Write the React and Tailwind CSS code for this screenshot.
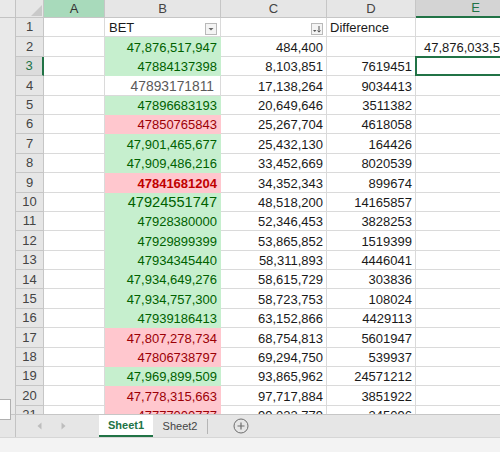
import React from 'react';

const rows = [
  { b: 'BET', t: 'hdr', c: '', d: 'Difference', e: '' },
  { b: '47,876,517,947', t: 'g', c: '484,400', d: '', e: '47,876,033,5' },
  { b: '47884137398', t: 'g', c: '8,103,851', d: '7619451', e: '' },
  { b: '47893171811', t: 'n', c: '17,138,264', d: '9034413', e: '' },
  { b: '47896683193', t: 'g', c: '20,649,646', d: '3511382', e: '' },
  { b: '47850765843', t: 'r', c: '25,267,704', d: '4618058', e: '' },
  { b: '47,901,465,677', t: 'g', c: '25,432,130', d: '164426', e: '' },
  { b: '47,909,486,216', t: 'g', c: '33,452,669', d: '8020539', e: '' },
  { b: '47841681204', t: 'rb', c: '34,352,343', d: '899674', e: '' },
  { b: '47924551747', t: 'gl', c: '48,518,200', d: '14165857', e: '' },
  { b: '47928380000', t: 'g', c: '52,346,453', d: '3828253', e: '' },
  { b: '47929899399', t: 'g', c: '53,865,852', d: '1519399', e: '' },
  { b: '47934345440', t: 'g', c: '58,311,893', d: '4446041', e: '' },
  { b: '47,934,649,276', t: 'g', c: '58,615,729', d: '303836', e: '' },
  { b: '47,934,757,300', t: 'g', c: '58,723,753', d: '108024', e: '' },
  { b: '47939186413', t: 'g', c: '63,152,866', d: '4429113', e: '' },
  { b: '47,807,278,734', t: 'r', c: '68,754,813', d: '5601947', e: '' },
  { b: '47806738797', t: 'r', c: '69,294,750', d: '539937', e: '' },
  { b: '47,969,899,509', t: 'g', c: '93,865,962', d: '24571212', e: '' },
  { b: '47,778,315,663', t: 'r', c: '97,717,884', d: '3851922', e: '' },
  { b: '47777000777', t: 'r', c: '99,023,779', d: '345096', e: '' },
];

function FilterBtn() {
  return (
    <div className="w-[12px] h-[12px] border border-[#b9b9b9] bg-[#f4f4f4] flex items-center justify-center">
      <svg width="8" height="8" viewBox="0 0 8 8">
        <path d="M1.5 3 L6.5 3 L4 5.5 Z" fill="#666" />
      </svg>
    </div>
  );
}

function SortFilterBtn() {
  return (
    <div className="w-[12px] h-[12px] border border-[#b9b9b9] bg-[#f4f4f4] flex items-center justify-center">
      <svg width="10" height="10" viewBox="0 0 10 10">
        <path d="M1 6 L4.5 6 L2.75 8 Z" fill="#555" />
        <path d="M7 2 L7 8" stroke="#555" strokeWidth="1" />
        <path d="M5.5 6.5 L7 8.2 L8.5 6.5" stroke="#555" strokeWidth="1" fill="none" />
      </svg>
    </div>
  );
}

function BCell({ row }) {
  const t = row.t;
  if (t === 'hdr') {
    return (
      <div className="w-[116px] shrink-0 border-r border-b border-[#dadada] bg-white flex items-end justify-between pl-[4px] pr-[3px] pb-[1px]">
        <span className="text-[13px] leading-[15px] text-[#1a1a1a]">{row.b}</span>
        <div className="pb-[0px]"><FilterBtn /></div>
      </div>
    );
  }
  const cls =
    t === 'g'
      ? 'bg-[#c6efce] border-[#c6efce] text-[#006100] text-[13px]'
      : t === 'gl'
      ? 'bg-[#c6efce] border-[#c6efce] text-[#006100] text-[14.6px]'
      : t === 'r'
      ? 'bg-[#ffc7ce] border-[#ffc7ce] text-[#9c0006] text-[13px]'
      : t === 'rb'
      ? 'bg-[#ffc7ce] border-[#ffc7ce] text-[#c00000] text-[13px] font-bold'
      : 'bg-white border-[#dadada] text-[#595959] text-[13.8px] pr-[6px]';
  return (
    <div className={`w-[116px] shrink-0 border-r border-b flex items-end justify-end pr-[3px] pb-[1px] ${cls}`}>
      <span className="leading-[15px] whitespace-nowrap">{row.b}</span>
    </div>
  );
}

function Row({ row, n }) {
  const sel = n === 3;
  return (
    <div className="flex h-[19.4px] shrink-0">
      <div className="w-[16px] shrink-0 bg-[#e9e9e9] border-r border-[#c3c3c3]" />
      <div
        className={
          sel
            ? 'w-[28px] shrink-0 bg-[#dcdcdc] border-b border-[#c6c6c6] border-r-2 border-r-[#217346] flex items-center justify-center text-[13px] text-[#217346]'
            : 'w-[28px] shrink-0 bg-[#e6e6e6] border-r border-b border-[#c6c6c6] flex items-center justify-center text-[13px] text-[#444]'
        }
      >
        {n}
      </div>
      <div className="w-[61px] shrink-0 border-r border-b border-[#dadada] bg-white" />
      <BCell row={row} />
      <div className="w-[106px] shrink-0 border-r border-b border-[#dadada] bg-white flex items-end justify-end pr-[3px] pb-[1px]">
        {n === 1 ? (
          <SortFilterBtn />
        ) : (
          <span className="text-[13px] leading-[15px] text-[#1a1a1a] whitespace-nowrap">{row.c}</span>
        )}
      </div>
      <div
        className={
          n === 1
            ? 'w-[89px] shrink-0 border-r border-b border-[#dadada] bg-white flex items-end justify-start pl-[3px] pb-[1px]'
            : 'w-[89px] shrink-0 border-r border-b border-[#dadada] bg-white flex items-end justify-end pr-[3px] pb-[1px]'
        }
      >
        <span className="text-[13px] leading-[15px] text-[#1a1a1a] whitespace-nowrap">{row.d}</span>
      </div>
      <div className="relative w-[120px] shrink-0 border-r border-b border-[#dadada] bg-white flex items-end pl-[8px] pb-[1px] overflow-visible">
        <span className="text-[13px] leading-[15px] text-[#1a1a1a] whitespace-nowrap">{row.e}</span>
        {sel && (
          <div className="absolute left-[-1px] top-[-1px] bottom-[-1px] right-[-2px] border-2 border-[#217346]" />
        )}
      </div>
    </div>
  );
}

export default function App() {
  return (
    <div className="relative w-[500px] h-[452px] overflow-hidden bg-white font-['Liberation_Sans',Arial,sans-serif] flex flex-col">
      <div className="h-[414px] shrink-0 overflow-hidden flex flex-col">
        {/* column headers */}
        <div className="flex h-[18px] shrink-0">
          <div className="w-[16px] shrink-0 bg-[#e9e9e9] border-r border-b border-[#c3c3c3]" />
          <div className="w-[28px] shrink-0 bg-[#e6e6e6] border-r border-b border-[#c6c6c6] flex items-end justify-end pr-[1px] pb-[1px]">
            <svg width="12" height="12" viewBox="0 0 12 12">
              <path d="M12 1 L12 12 L1 12 Z" fill="#c9c9c9" />
            </svg>
          </div>
          <div className="w-[61px] shrink-0 bg-[#a8dabb] border-r border-b border-[#c6c6c6] flex items-center justify-center text-[13px] text-[#333]">A</div>
          <div className="w-[116px] shrink-0 bg-[#e6e6e6] border-r border-b border-[#c6c6c6] flex items-center justify-center text-[13px] text-[#444]">B</div>
          <div className="w-[106px] shrink-0 bg-[#e6e6e6] border-r border-b border-[#c6c6c6] flex items-center justify-center text-[13px] text-[#444]">C</div>
          <div className="w-[89px] shrink-0 bg-[#e6e6e6] border-r border-b border-[#c6c6c6] flex items-center justify-center text-[13px] text-[#444]">D</div>
          <div className="w-[120px] shrink-0 bg-[#d4d4d4] border-r border-[#c6c6c6] border-b-2 border-b-[#217346] flex items-center justify-center text-[13px] text-[#217346]">E</div>
        </div>
        {rows.map((r, i) => (
          <Row key={i} row={r} n={i + 1} />
        ))}
      </div>
      {/* sheet tab bar */}
      <div className="h-[23px] shrink-0 flex bg-[#e6e6e6] border-t border-[#c6c6c6]">
        <div className="w-[16px] shrink-0 border-r border-[#c3c3c3]" />
        <div className="w-[83px] shrink-0 flex items-center pl-[21px] gap-[19px]">
          <svg width="5" height="8" viewBox="0 0 5 8"><path d="M4.5 0.5 L0.5 4 L4.5 7.5 Z" fill="#bdbdbd" /></svg>
          <svg width="5" height="8" viewBox="0 0 5 8"><path d="M0.5 0.5 L4.5 4 L0.5 7.5 Z" fill="#bdbdbd" /></svg>
        </div>
        <div className="w-[54px] shrink-0 bg-white border-b-2 border-[#217346] flex items-center justify-center text-[11px] font-bold text-[#217346]">Sheet1</div>
        <div className="w-[54px] shrink-0 flex items-center justify-center text-[11px] text-[#444]">Sheet2</div>
        <div className="w-[1px] h-[15px] self-center bg-[#b5b5b5]" />
        <div className="w-[65px] flex items-center justify-center">
          <svg width="16" height="16" viewBox="0 0 16 16">
            <circle cx="8" cy="8" r="7" fill="none" stroke="#6e6e6e" strokeWidth="1" />
            <path d="M8 4.5 L8 11.5 M4.5 8 L11.5 8" stroke="#6e6e6e" strokeWidth="1.2" />
          </svg>
        </div>
        <div className="flex-1" />
      </div>
      <div className="flex-1 bg-[#f3f3f3] border-t border-[#d6d6d6]" />
      {/* partial box on left edge */}
      <div className="absolute left-0 top-[399px] w-[11px] h-[21px] bg-white border-r border-t border-b border-[#b0b0b0]" />
    </div>
  );
}
